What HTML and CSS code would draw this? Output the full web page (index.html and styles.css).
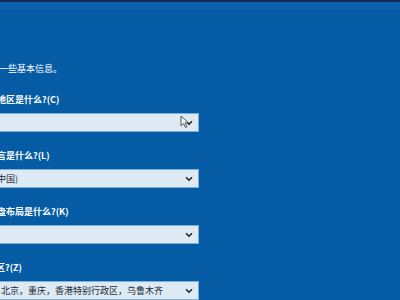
FILE: index.html
```html
<!DOCTYPE html>
<html lang="zh-CN">
<head>
<meta charset="utf-8">
<link rel="stylesheet" href="styles.css">
</head>
<body>
<div class="screen">
  <div class="topline"></div>
  <div class="topband"></div>
  <div class="content">
    <p class="intro">一些基本信息。</p>
    <div class="group">
      <div class="label"><span class="cut">地区是什么?(C)</span></div>
      <div class="bar">
        <span class="value"></span>
        <svg class="cursor" width="10" height="14" viewBox="0 0 10 14"><path d="M1 1 L1 11 L3.5 8.5 L5.5 12.5 L7 11.8 L5 7.8 L8.5 7.8 Z" fill="#f4f6f8" stroke="#555" stroke-width="1"/></svg>
        <svg class="chev" width="8" height="6" viewBox="0 0 8 6"><path d="M1 1.2 L4 4.2 L7 1.2" fill="none" stroke="#222" stroke-width="1.6"/></svg>
      </div>
    </div>
    <div class="group">
      <div class="label"><span class="cut">言是什么?(L)</span></div>
      <div class="bar">
        <span class="value cut">中国)</span>
        <svg class="chev" width="8" height="6" viewBox="0 0 8 6"><path d="M1 1.2 L4 4.2 L7 1.2" fill="none" stroke="#222" stroke-width="1.6"/></svg>
      </div>
    </div>
    <div class="group">
      <div class="label"><span class="cut">盘布局是什么?(K)</span></div>
      <div class="bar">
        <span class="value"></span>
        <svg class="chev" width="8" height="6" viewBox="0 0 8 6"><path d="M1 1.2 L4 4.2 L7 1.2" fill="none" stroke="#222" stroke-width="1.6"/></svg>
      </div>
    </div>
    <div class="group">
      <div class="label"><span class="cut more">区?(Z)</span></div>
      <div class="bar">
        <span class="value tz">北京，重庆，香港特别行政区，乌鲁木齐</span>
        <svg class="chev" width="8" height="6" viewBox="0 0 8 6"><path d="M1 1.2 L4 4.2 L7 1.2" fill="none" stroke="#222" stroke-width="1.6"/></svg>
      </div>
    </div>
  </div>
</div>
</body>
</html>
```
FILE: styles.css
```css
html, body {
  margin: 0;
  padding: 0;
}
body {
  width: 400px;
  height: 300px;
  overflow: hidden;
  background: #055ca4;
  font-family: "Noto Sans CJK SC", "Noto Sans", sans-serif;
  color: #ffffff;
}
.screen {
  width: 400px;
  height: 300px;
  overflow: hidden;
  display: flex;
  flex-direction: column;
}
.topline {
  height: 2px;
  background: #16285a;
}
.topband {
  height: 10px;
  background: #0a60aa;
}
.content {
  display: flex;
  flex-direction: column;
  gap: 17px;
  width: 199px;
}
.intro {
  margin: 52px 0 0 0;
  font-size: 9px;
  line-height: 14px;
  margin-left: -1px;
  white-space: nowrap;
}
.group {
  display: flex;
  flex-direction: column;
  gap: 6px;
}
.label {
  font-size: 9px;
  line-height: 14px;
  font-weight: bold;
  white-space: nowrap;
  overflow: hidden;
}
.cut {
  display: inline-block;
  margin-left: -3px;
}
.cut.more {
  margin-left: -4px;
}
.bar {
  position: relative;
  height: 19px;
  box-sizing: border-box;
  background: #dde9f3;
  border: 1px solid #7db2dc;
  border-left: none;
  display: flex;
  align-items: center;
  justify-content: space-between;
  overflow: hidden;
  padding-right: 5px;
  color: #1e2a36;
  font-size: 9px;
  white-space: nowrap;
}
.value {
  line-height: 17px;
}
.value.tz {
  margin-left: 1px;
}
.cursor {
  position: absolute;
  left: 180px;
  top: 1px;
}
.chev {
  flex: none;
}
```
